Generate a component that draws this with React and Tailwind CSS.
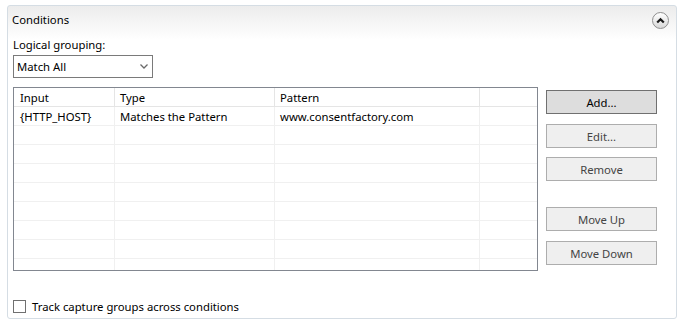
import React from "react";

const rows = [
  ["{HTTP_HOST}", "Matches the Pattern", "www.consentfactory.com"],
  ["", "", ""],
  ["", "", ""],
  ["", "", ""],
  ["", "", ""],
  ["", "", ""],
  ["", "", ""],
  ["", "", ""],
  ["", "", ""],
];

function Btn({ children, primary }) {
  return (
    <div
      className={
        "h-[24px] w-[111px] flex items-center justify-center border pt-[1px] " +
        (primary
          ? "border-[#707070] bg-[#dddddd] text-black"
          : "border-[#adadad] bg-[#efefef] text-[#444444]")
      }
    >
      {children}
    </div>
  );
}

export default function App() {
  return (
    <div
      className="w-[687px] h-[323px] bg-white pt-[5px] pl-[7px] text-[11.3px] text-black leading-[16px]"
      style={{ fontFamily: '"Noto Sans", "Open Sans", sans-serif' }}
    >
      <div className="w-[670px] h-[314px] border border-[#d5dde4] rounded-[3px] bg-[linear-gradient(to_bottom,#ececec,#ffffff_34px)] flex flex-col">
        <div className="h-[26px] flex items-center justify-between pl-[4px] pr-[7px]">
          <span className="pt-[2px]">Conditions</span>
          <div className="w-[17px] h-[17px] mt-[2px] rounded-full border border-[#8f8f8f] bg-[linear-gradient(to_bottom,#ffffff,#d8d8d8)] flex items-center justify-center">
            <svg width="9" height="7" viewBox="0 0 9 7">
              <path d="M1.2 5.5 L4.5 2.2 L7.8 5.5" fill="none" stroke="#1a1a1a" strokeWidth="2.2" />
            </svg>
          </div>
        </div>
        <div className="pl-[5px] flex flex-col">
          <div className="mt-[4px] h-[16px] pt-[1px]">Logical grouping:</div>
          <div className="mt-[3px] w-[140px] h-[23px] border border-[#7a7a7a] bg-white flex items-center justify-between pl-[3px] pr-[4px]">
            <span className="pt-[1px]">Match All</span>
            <svg width="8" height="5" viewBox="0 0 8 5">
              <path d="M0.5 0.5 L4 4 L7.5 0.5" fill="none" stroke="#6a6a6a" strokeWidth="1.3" />
            </svg>
          </div>
          <div className="mt-[9px] flex gap-[8px]">
            <div className="w-[525px] h-[184px] border border-[#828790] bg-white overflow-hidden">
              <div className="flex h-[19px] border-b border-[#e5e5e5]">
                <div className="w-[101px] border-r border-[#e5e5e5] pl-[6px] pt-[1px] flex items-center">Input</div>
                <div className="w-[160px] border-r border-[#e5e5e5] pl-[5px] pt-[1px] flex items-center">Type</div>
                <div className="w-[205px] border-r border-[#e5e5e5] pl-[5px] pt-[1px] flex items-center">Pattern</div>
                <div className="flex-1"></div>
              </div>
              {rows.map((r, i) => (
                <div key={i} className="flex h-[19px] border-b border-[#f0f0f0]">
                  <div className="w-[101px] border-r border-[#f0f0f0] pl-[6px] pt-[1px] flex items-center">{r[0]}</div>
                  <div className="w-[160px] border-r border-[#f0f0f0] pl-[5px] pt-[1px] flex items-center">{r[1]}</div>
                  <div className="w-[205px] border-r border-[#f0f0f0] pl-[5px] pt-[1px] flex items-center">{r[2]}</div>
                  <div className="flex-1"></div>
                </div>
              ))}
            </div>
            <div className="pt-[3px] flex flex-col">
              <Btn primary>Add...</Btn>
              <div className="mt-[10px]"><Btn>Edit...</Btn></div>
              <div className="mt-[9px]"><Btn>Remove</Btn></div>
              <div className="mt-[26px]"><Btn>Move Up</Btn></div>
              <div className="mt-[10px]"><Btn>Move Down</Btn></div>
            </div>
          </div>
          <div className="mt-[27px] h-[16px] flex items-center gap-[6px]">
            <div className="w-[13px] h-[13px] border border-[#707070] bg-white"></div>
            <span className="pt-[1px]">Track capture groups across conditions</span>
          </div>
        </div>
      </div>
    </div>
  );
}
